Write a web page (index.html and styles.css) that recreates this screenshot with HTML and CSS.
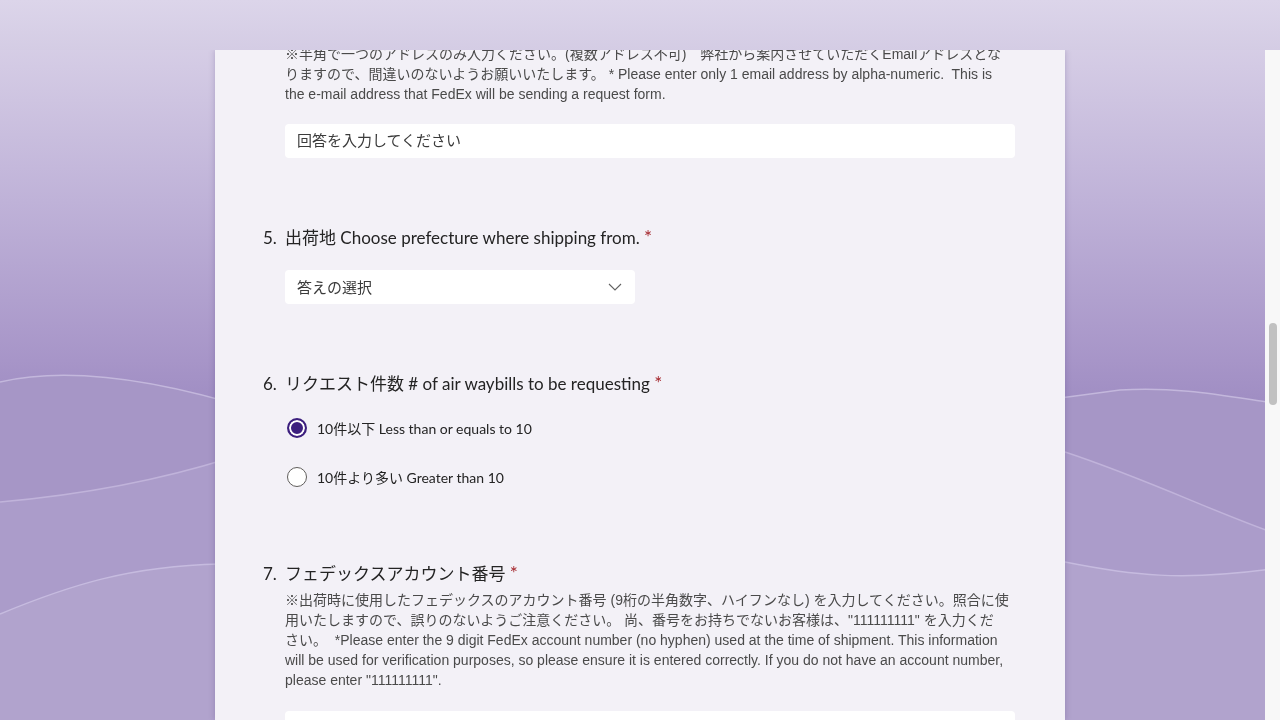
FILE: index.html
```html
<!DOCTYPE html>
<html lang="ja">
<head>
    <meta charset="utf-8">
    <title>FedEx Air Waybill Request</title>
    <link rel="stylesheet" href="styles.css">
</head>
<body>
    <svg class="backdrop" viewBox="0 0 1280 720" preserveAspectRatio="none" aria-hidden="true">
        <defs>
            <linearGradient id="sky" x1="0" y1="0" x2="0" y2="1">
                <stop offset="0" stop-color="#ddd6ea"/>
                <stop offset="0.28" stop-color="#bfb2d8"/>
                <stop offset="0.5" stop-color="#a795c8"/>
                <stop offset="0.6" stop-color="#9a88bf"/>
                <stop offset="1" stop-color="#9a88bf"/>
            </linearGradient>
        </defs>
        <rect width="1280" height="720" fill="url(#sky)"/>
        <path d="M0,382 C60,368 150,372 300,425 C500,470 900,420 1120,390 C1180,386 1230,397 1280,404 L1280,720 L0,720 Z" fill="#a696c6"/>
        <path d="M0,382 C60,368 150,372 300,425 C500,470 900,420 1120,390 C1180,386 1230,397 1280,404" fill="none" stroke="#c3b7dc" stroke-width="1.5"/>
        <path d="M0,502 C80,495 160,480 230,458 C600,340 900,400 1065,452 C1150,480 1220,515 1280,535 L1280,720 L0,720 Z" fill="#ab9cca"/>
        <path d="M0,502 C80,495 160,480 230,458 C600,340 900,400 1065,452 C1150,480 1220,515 1280,535" fill="none" stroke="#c0b3da" stroke-width="1.5"/>
        <path d="M0,614 C70,585 130,566 220,564 C600,555 900,548 1065,562 C1130,575 1180,582 1280,568 L1280,720 L0,720 Z" fill="#b1a3cd"/>
        <path d="M0,614 C70,585 130,566 220,564 C600,555 900,548 1065,562 C1130,575 1180,582 1280,568" fill="none" stroke="#c6bbdf" stroke-width="1.5"/>
    </svg>

    <header class="topbar"></header>

    <div class="viewport">
        <main class="page">
            <div class="form-card">

                <section class="question q-email">
                    <p class="desc">※半角で一つのアドレスのみ入力ください。(複数アドレス不可)　弊社から案内させていただくEmailアドレスとなりますので、間違いのないようお願いいたします。 * Please enter only 1 email address by alpha-numeric.&nbsp; This is the e-mail address that FedEx will be sending a request form.</p>
                    <div class="text-input">回答を入力してください</div>
                </section>

                <section class="question q-pref">
                    <h2 class="q-title"><span class="q-num">5.</span><span class="q-text">出荷地 Choose prefecture where shipping from. <span class="req">*</span></span></h2>
                    <div class="answer">
                        <div class="dropdown">
                            <span>答えの選択</span>
                            <svg class="chev" width="14" height="8" viewBox="0 0 14 8"><polyline points="1,1 7,7 13,1" fill="none" stroke="#616161" stroke-width="1.1"/></svg>
                        </div>
                    </div>
                </section>

                <section class="question q-count">
                    <h2 class="q-title"><span class="q-num">6.</span><span class="q-text">リクエスト件数 # of air waybills to be requesting <span class="req">*</span></span></h2>
                    <div class="answer choices">
                        <label class="choice"><span class="radio checked"></span>10件以下 Less than or equals to 10</label>
                        <label class="choice"><span class="radio"></span>10件より多い Greater than 10</label>
                    </div>
                </section>

                <section class="question q-account">
                    <h2 class="q-title"><span class="q-num">7.</span><span class="q-text">フェデックスアカウント番号 <span class="req">*</span></span></h2>
                    <div class="answer">
                        <p class="desc wide">※出荷時に使用したフェデックスのアカウント番号 (9桁の半角数字、ハイフンなし) を入力してください。照合に使用いたしますので、誤りのないようご注意ください。 尚、番号をお持ちでないお客様は、"111111111" を入力くだ<br>さい。&nbsp; *Please enter the 9 digit FedEx account number (no hyphen) used at the time of shipment. This information will be used for verification purposes, so please ensure it is entered correctly. If you do not have an account number, please enter "111111111".</p>
                        <div class="text-input">回答を入力してください</div>
                    </div>
                </section>

            </div>
        </main>
        <div class="scrollbar"><div class="thumb"></div></div>
    </div>
</body>
</html>
```

FILE: styles.css
```css
html, body {
    margin: 0;
    padding: 0;
    height: 100%;
    overflow: hidden;
}
body {
    font-family: "Lato", "Noto Sans CJK JP", sans-serif;
    color: #242424;
    display: flex;
    flex-direction: column;
}
.backdrop {
    position: fixed;
    left: 0;
    top: 0;
    width: 1280px;
    height: 720px;
    z-index: -1;
}
.topbar {
    height: 50px;
    flex: none;
    background: linear-gradient(#dcd5ea, #d4cce4);
    position: relative;
    z-index: 2;
}
.viewport {
    flex: 1;
    display: flex;
    min-height: 0;
}
.page {
    flex: 1;
    overflow: hidden;
    padding-left: 215px;
}
.form-card {
    width: 850px;
    height: 100%;
    background: #f3f1f7;
    box-shadow: 0 0 6px rgba(60, 40, 100, 0.25);
    box-sizing: border-box;
    padding: 0 50px 0 48px;
}
.scrollbar {
    width: 15px;
    flex: none;
    background: #f8f8f8;
    padding: 273px 3px 0 4px;
    box-sizing: border-box;
}
.thumb {
    height: 82px;
    border-radius: 4px;
    background: #c1c1c1;
}

.question {
    display: flex;
    flex-direction: column;
}
.q-email {
    padding-left: 22px;
}
.q-email .desc {
    margin-top: -6px;
}
.q-pref {
    margin-top: 68px;
}
.q-count {
    margin-top: 68px;
}
.q-account {
    margin-top: 75px;
}
.q-title {
    display: flex;
    margin: 0;
    height: 24px;
    font-size: 17px;
    font-weight: normal;
    line-height: 24px;
    color: #242424;
}
.q-num {
    width: 22px;
    flex: none;
}
.req {
    color: #a4262c;
    font-size: 19px;
    line-height: 0;
}
.answer {
    padding-left: 22px;
}
.desc {
    margin: 0;
    max-width: 720px;
    font-family: "Liberation Sans", "Noto Sans CJK JP", sans-serif;
    font-size: 14px;
    line-height: 20px;
    color: #4a4a4a;
}
.desc.wide {
    max-width: 728px;
}
.text-input {
    margin-top: 20px;
    height: 34px;
    line-height: 32px;
    background: #fff;
    border-radius: 4px;
    padding: 0 12px;
    font-family: "Noto Sans CJK JP", sans-serif;
    font-size: 15px;
    color: #3b3b3b;
}
.q-account .text-input {
    margin-top: 21px;
}
.dropdown {
    margin-top: 20px;
    width: 350px;
    height: 34px;
    box-sizing: border-box;
    background: #fff;
    border-radius: 4px;
    padding: 0 13px 2px 12px;
    display: flex;
    align-items: center;
    justify-content: space-between;
    font-family: "Noto Sans CJK JP", sans-serif;
    font-size: 15px;
    color: #3b3b3b;
}
.chev {
    margin-top: 2px;
}
.choices {
    display: flex;
    flex-direction: column;
    gap: 29px;
    margin-top: 22px;
}
.choice {
    display: flex;
    align-items: center;
    height: 20px;
    font-size: 14px;
    color: #242424;
}
.radio {
    width: 18px;
    height: 18px;
    border: 1px solid #605e5c;
    border-radius: 50%;
    background: #fff;
    margin: 0 10px 0 2px;
    box-sizing: content-box;
    flex: none;
}
.radio.checked {
    width: 16px;
    height: 16px;
    border: 2px solid #3c1f7e;
    background: #3c1f7e;
    box-shadow: inset 0 0 0 2px #fff;
}
.q-account .desc {
    margin-top: 4px;
}
```
